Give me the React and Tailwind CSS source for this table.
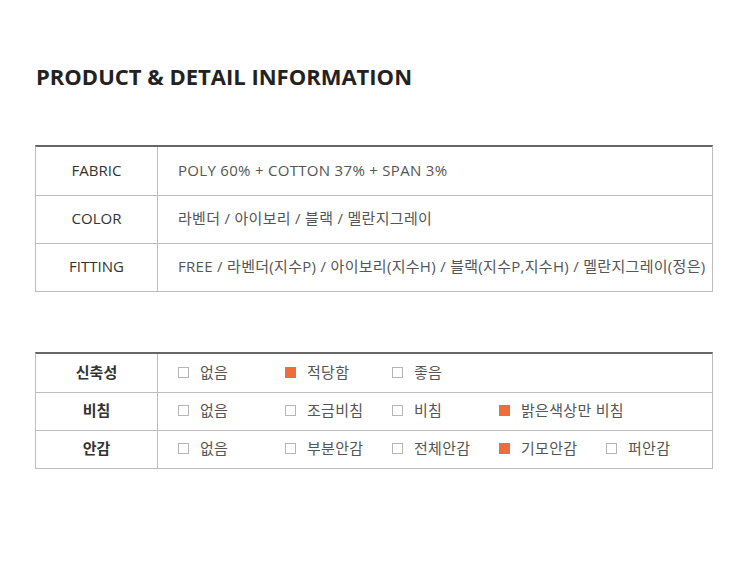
const specRows = [
  { label: "FABRIC", value: "POLY 60% + COTTON 37% + SPAN 3%" },
  { label: "COLOR", value: "라벤더 / 아이보리 / 블랙 / 멜란지그레이" },
  {
    label: "FITTING",
    value: "FREE / 라벤더(지수P) / 아이보리(지수H) / 블랙(지수P,지수H) / 멜란지그레이(정은)",
  },
];

const feelRows = [
  {
    label: "신축성",
    options: [
      { text: "없음" },
      { text: "적당함", on: true },
      { text: "좋음" },
    ],
  },
  {
    label: "비침",
    options: [
      { text: "없음" },
      { text: "조금비침" },
      { text: "비침" },
      { text: "밝은색상만 비침", on: true },
    ],
  },
  {
    label: "안감",
    options: [
      { text: "없음" },
      { text: "부분안감" },
      { text: "전체안감" },
      { text: "기모안감", on: true },
      { text: "퍼안감" },
    ],
  },
];

function Check({ on }) {
  return on ? (
    <span className="inline-block shrink-0 w-[11px] h-[11px] bg-[#ee6d3a]" />
  ) : (
    <span className="inline-block shrink-0 w-[11px] h-[11px] border border-[#b5b5b5] bg-white" />
  );
}

export default function App() {
  return (
    <div
      className="w-[750px] h-[566px] bg-white pl-[35px] pt-[59px]"
      style={{ fontFamily: '"Open Sans", "Noto Sans CJK KR", sans-serif' }}
    >
      <h1 className="ml-[1px] text-[22px] leading-[34px] font-bold text-[#222]">
        PRODUCT &amp; DETAIL INFORMATION
      </h1>

      {/* spec table */}
      <div className="mt-[52px] w-[678px] border-t-2 border-t-[#666] border-x border-b border-x-[#bdbdbd] border-b-[#bdbdbd]">
        {specRows.map((row, i) => (
          <div
            key={row.label}
            className={`flex h-[48px] ${i > 0 ? "border-t border-[#bdbdbd]" : ""}`}
          >
            <div className="w-[122px] shrink-0 border-r border-[#bdbdbd] flex items-center justify-center pb-[2px] text-[15px] text-[#333]">
              {row.label}
            </div>
            <div className="flex-1 flex items-center pl-[20px] pb-[2px] text-[15px] tracking-[0.3px] text-[#555] whitespace-nowrap">
              {row.value}
            </div>
          </div>
        ))}
      </div>

      {/* feel table */}
      <div className="mt-[60px] w-[678px] border-t-2 border-t-[#666] border-x border-b border-x-[#bdbdbd] border-b-[#bdbdbd]">
        {feelRows.map((row, i) => (
          <div
            key={row.label}
            className={`flex h-[38px] ${i > 0 ? "border-t border-[#bdbdbd]" : ""}`}
          >
            <div className="w-[122px] shrink-0 border-r border-[#bdbdbd] flex items-center justify-center pb-[2px] text-[15px] font-bold text-[#333]">
              {row.label}
            </div>
            <div className="flex-1 flex items-center pl-[20px] pb-[2px]">
              {row.options.map((opt) => (
                <div key={opt.text} className="w-[107px] shrink-0 flex items-center gap-[11px]">
                  <Check on={opt.on} />
                  <span className="text-[15px] tracking-[0.3px] text-[#555] whitespace-nowrap">{opt.text}</span>
                </div>
              ))}
            </div>
          </div>
        ))}
      </div>
    </div>
  );
}
